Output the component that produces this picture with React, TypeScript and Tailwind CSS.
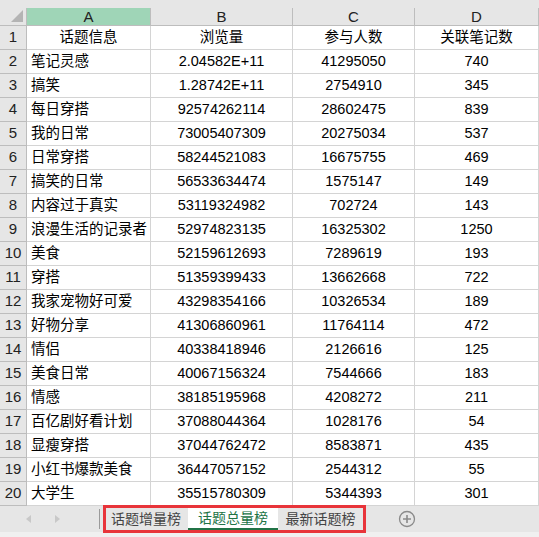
const rows: [string, string, string, string][] = [
  ['笔记灵感', '2.04582E+11', '41295050', '740'],
  ['搞笑', '1.28742E+11', '2754910', '345'],
  ['每日穿搭', '92574262114', '28602475', '839'],
  ['我的日常', '73005407309', '20275034', '537'],
  ['日常穿搭', '58244521083', '16675755', '469'],
  ['搞笑的日常', '56533634474', '1575147', '149'],
  ['内容过于真实', '53119324982', '702724', '143'],
  ['浪漫生活的记录者', '52974823135', '16325302', '1250'],
  ['美食', '52159612693', '7289619', '193'],
  ['穿搭', '51359399433', '13662668', '722'],
  ['我家宠物好可爱', '43298354166', '10326534', '189'],
  ['好物分享', '41306860961', '11764114', '472'],
  ['情侣', '40338418946', '2126616', '125'],
  ['美食日常', '40067156324', '7544666', '183'],
  ['情感', '38185195968', '4208272', '211'],
  ['百亿剧好看计划', '37088044364', '1028176', '54'],
  ['显瘦穿搭', '37044762472', '8583871', '435'],
  ['小红书爆款美食', '36447057152', '2544312', '55'],
  ['大学生', '35515780309', '5344393', '301'],
];

const grid = 'grid grid-cols-[27px_124px_142px_122px_124px]';
const cell = 'h-[24px] border-r border-b border-[#d4d4d4] flex items-center';
const rowHead =
  'h-[24px] bg-[#e6e6e6] border-r border-b border-[#bdbdbd] flex items-end justify-center pb-[1px] text-[15px] text-[#222]';

export default function App() {
  return (
    <div
      className="w-[539px] h-[537px] overflow-hidden bg-white text-[14.5px] text-black"
      style={{ fontFamily: '"Liberation Sans", "Noto Sans CJK SC", sans-serif' }}
    >
      <div className="h-[8px] bg-[#e6e6e6]" />
      {/* column header */}
      <div className={`${grid} h-[18px] bg-[#e6e6e6] text-[15px] text-[#222]`}>
        <div className="relative border-r border-b border-[#bdbdbd]">
          <div className="absolute right-[3px] bottom-[3px] w-0 h-0 border-l-[12px] border-l-transparent border-b-[12px] border-b-[#b4b4b4]" />
        </div>
        <div className="bg-[#9fd5b7] border-r border-b border-[#bdbdbd] flex items-center justify-center leading-none">A</div>
        <div className="border-r border-b border-[#bdbdbd] flex items-center justify-center leading-none">B</div>
        <div className="border-r border-b border-[#bdbdbd] flex items-center justify-center leading-none">C</div>
        <div className="border-r border-b border-[#bdbdbd] flex items-center justify-center leading-none">D</div>
      </div>

      <div className={grid}>
        <div className={rowHead}>1</div>
        <div className={`${cell} justify-center`}>话题信息</div>
        <div className={`${cell} justify-center`}>浏览量</div>
        <div className={`${cell} justify-center`}>参与人数</div>
        <div className={`${cell} justify-center`}>关联笔记数</div>
        {rows.map((r, i) => (
          <div key={i} className="contents">
            <div className={rowHead}>{i + 2}</div>
            <div className={`${cell} pl-[4px] whitespace-nowrap`}>{r[0]}</div>
            <div className={`${cell} justify-center`}>{r[1]}</div>
            <div className={`${cell} justify-center`}>{r[2]}</div>
            <div className={`${cell} justify-center`}>{r[3]}</div>
          </div>
        ))}
      </div>

      {/* sheet tabs */}
      <div className="h-[31px] bg-[#f0f0f0]">
        <div className="h-[26px] bg-[#e6e6e6] flex items-center">
          <div className="w-[100px] flex items-center h-full">
            <div className="ml-[26px] w-0 h-0 border-y-[4px] border-y-transparent border-r-[5px] border-r-[#c8c8c8]" />
            <div className="ml-[24px] w-0 h-0 border-y-[4px] border-y-transparent border-l-[5px] border-l-[#c8c8c8]" />
            <div className="ml-auto w-px h-[20px] bg-[#9a9a9a]" />
          </div>
          <div className="ml-[3px] -mt-[1px] self-start h-[28px] w-[263px] border-[3px] border-[#e8343a] flex items-stretch text-[14px] text-[#444]">
            <div className="w-[82px] flex items-center pl-[5px]">话题增量榜</div>
            <div className="w-[90px] bg-white border-b-2 border-[#217346] text-[#217346] flex items-center justify-center">
              话题总量榜
            </div>
            <div className="flex-1 flex items-center justify-center">最新话题榜</div>
          </div>
          <div className="ml-[32px]">
            <svg width="18" height="18" viewBox="0 0 18 18">
              <circle cx="9" cy="9" r="7.5" fill="none" stroke="#8a8a8a" strokeWidth="1.3" />
              <path d="M9 5v8M5 9h8" stroke="#8a8a8a" strokeWidth="1.6" />
            </svg>
          </div>
        </div>
      </div>
    </div>
  );
}
